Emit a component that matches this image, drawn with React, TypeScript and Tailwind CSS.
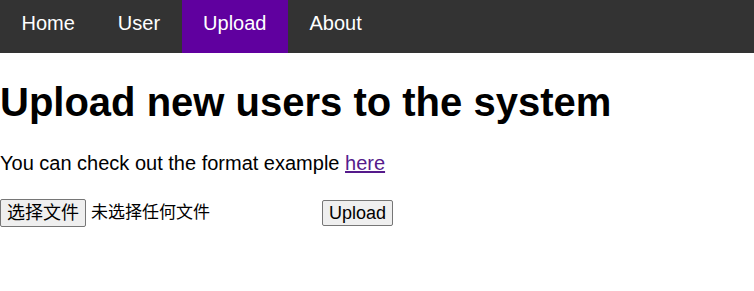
import React from "react";

const links = ["Home", "User", "Upload", "About"];

export default function App() {
  return (
    <div className="min-h-[291px] bg-white text-black font-['Liberation_Sans',Arial,sans-serif] text-[20px]">
      {/* Top navigation */}
      <ul className="flex bg-[#333333]">
        {links.map((link) => (
          <li key={link}>
            <a
              href="#"
              className={`block px-[21.5px] pt-[12px] pb-[18px] leading-[23px] text-white ${
                link === "Upload" ? "bg-[#60009f]" : ""
              }`}
            >
              {link}
            </a>
          </li>
        ))}
      </ul>

      <h1 className="mt-[26px] mb-[27px] text-[40px] font-bold leading-[46px]">
        Upload new users to the system
      </h1>

      <p className="leading-[23px]">
        You can check out the format example{" "}
        <a href="#" className="text-[#551a8b] underline">
          here
        </a>
      </p>

      {/* Upload form */}
      <form className="mt-[24px] flex items-center font-['Liberation_Sans','Noto_Sans_CJK_SC',sans-serif] text-[18px]">
        <div className="flex w-[322px] items-center">
          <span className="rounded-[2px] border border-[#767676] bg-[#efefef] px-[6px] py-px leading-[24px]">
            选择文件
          </span>
          <span className="ml-[5px] text-[17px] leading-[24px]">未选择任何文件</span>
        </div>
        <button
          type="button"
          className="rounded-[2px] border border-[#767676] bg-[#efefef] px-[6px] py-px leading-[22px]"
        >
          Upload
        </button>
      </form>
    </div>
  );
}
